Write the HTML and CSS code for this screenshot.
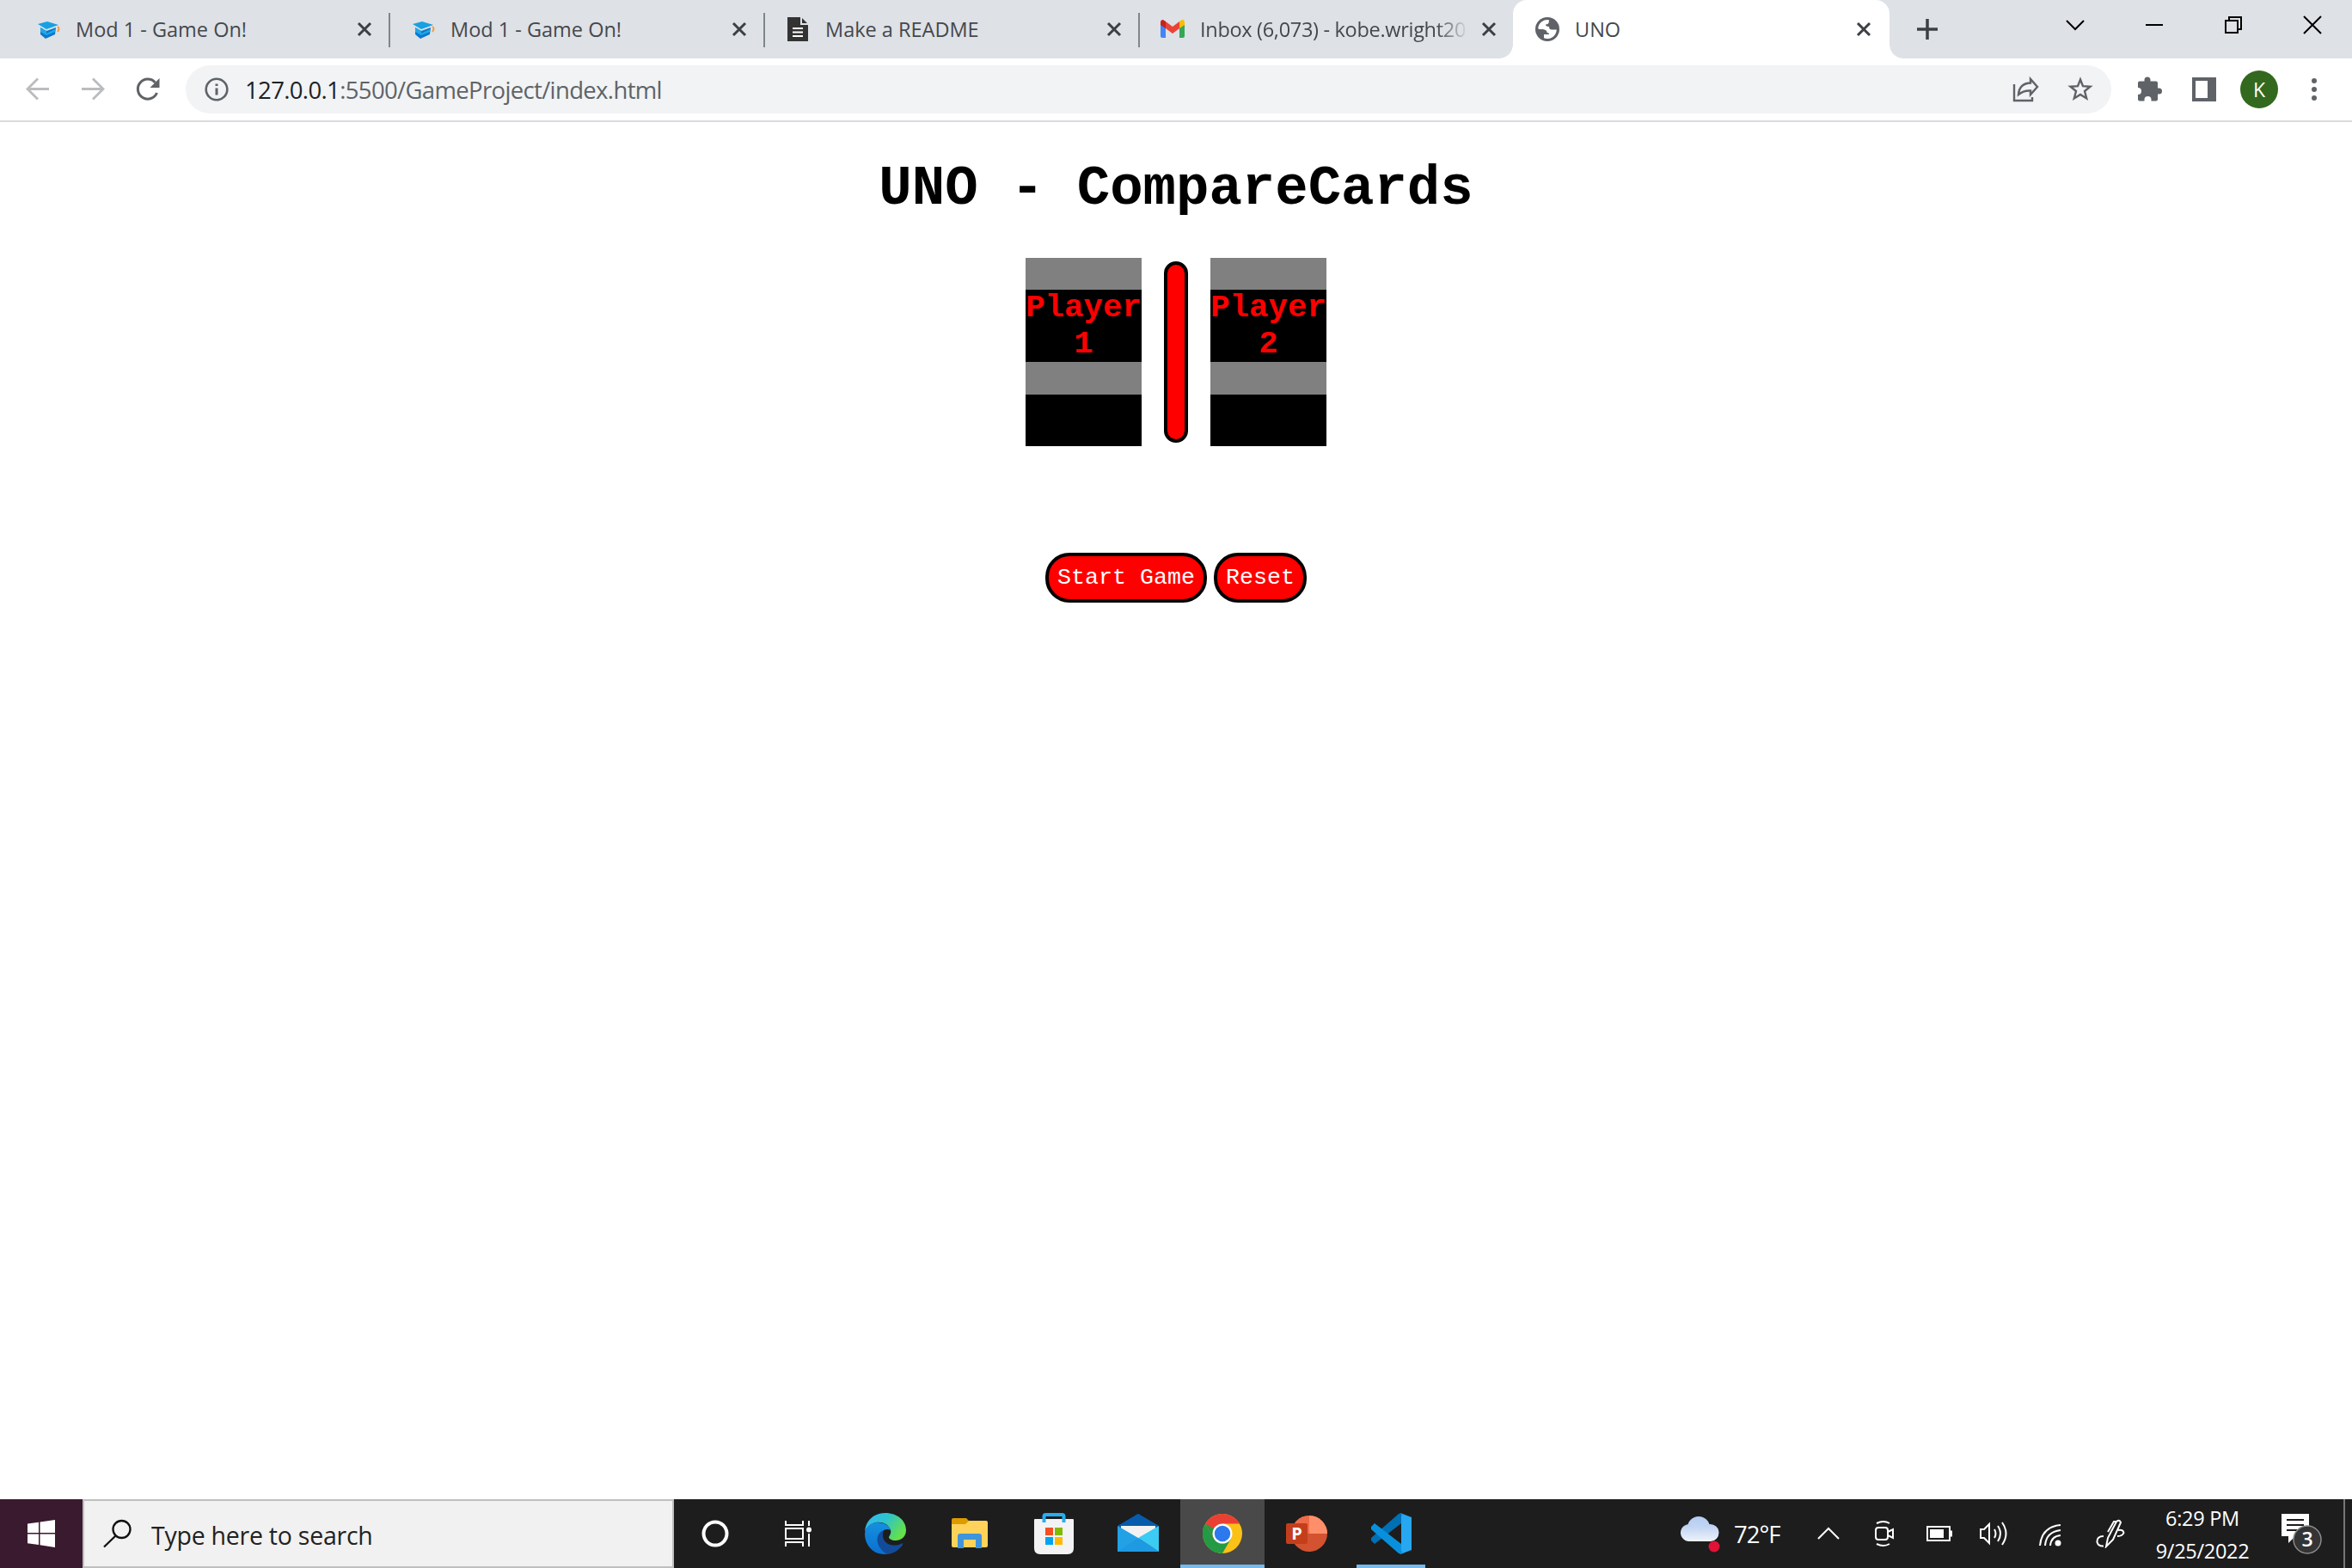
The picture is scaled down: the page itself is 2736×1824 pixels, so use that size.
FILE: index.html
```html
<!DOCTYPE html>
<html lang="en">
<head>
<meta charset="utf-8">
<title>UNO</title>
<link rel="stylesheet" href="styles.css">
</head>
<body>
<svg width="0" height="0" class="defs">
  <defs>
    <symbol id="x" viewBox="0 0 20 20"><path d="M3 3L17 17M17 3L3 17" stroke="#3c4043" stroke-width="3" fill="none"/></symbol>
    <symbol id="cap" viewBox="0 0 28 28"><path d="M5 12L12 16L23 12L22 20L11 25L5 20Z" fill="#0b78cc"/><path d="M5 12L12 16L12 19L22 14V17L12 21L5 17Z" fill="#1fa9e8"/><path d="M2 8L13 5L26 9L12 14Z" fill="#18a0e2"/><path d="M25 11Q28 13 25 17" stroke="#f59a3a" stroke-width="2" fill="none"/></symbol>
  </defs>
</svg>
<div class="tabs">
  <div class="tab"><svg class="fav"><use href="#cap"/></svg><span class="title">Mod 1 - Game On!</span><svg class="close"><use href="#x"/></svg></div>
  <div class="tab"><svg class="fav"><use href="#cap"/></svg><span class="title">Mod 1 - Game On!</span><svg class="close"><use href="#x"/></svg></div>
  <div class="tab"><svg class="fav" viewBox="0 0 28 28"><path d="M2 0H17V9H26V28H2Z" fill="#333"/><path d="M19 1L25 7H19Z" fill="#333"/><path d="M8 13H20M8 17.500H20M8 22H20" stroke="#fff" stroke-width="2"/></svg><span class="title">Make a README</span><svg class="close"><use href="#x"/></svg></div>
  <div class="tab last"><svg class="fav" viewBox="0 0 28 28"><path d="M0 6V22Q0 24 2 24H6V11Z" fill="#4285f4"/><path d="M28 6V22Q28 24 26 24H22V11Z" fill="#34a853"/><path d="M6 5L14 11L22 5V13L14 19L6 13Z" fill="#ea4335"/><path d="M0 9V6Q0 3 3 3L6 5V13Z" fill="#c5221f"/><path d="M28 9V6Q28 3 25 3L22 5V13Z" fill="#fbbc04"/></svg><span class="title inbox">Inbox (6,073) - kobe.wright20</span><svg class="close"><use href="#x"/></svg></div>
  <div class="tab active"><svg class="fav" viewBox="0 0 28 28"><circle cx="14" cy="14" r="14" fill="#5f6368"/><path d="M15.800 3.200A11 11 0 0 0 3.200 12.800L4 14H8.500Q13.500 14.500 13.500 17.500Q14.500 19 16 18.500V20H10V24.300A11 11 0 0 0 24.800 14.500H20Q16 15 16 11Q12 11 12 8.500Q15 8.500 15.800 6Z" fill="#fff"/></svg><span class="title">UNO</span><svg class="close"><use href="#x"/></svg></div>
  <svg class="plus" viewBox="0 0 24 24"><path d="M12 0V24M0 12H24" stroke="#3c4043" stroke-width="3.500"/></svg>
  <div class="winctl">
    <svg viewBox="0 0 24 24"><path d="M2 7L12 17L22 7" class="k"/></svg>
    <svg viewBox="0 0 24 24"><path d="M2 12H22" class="k"/></svg>
    <svg viewBox="0 0 24 24"><path d="M3 7H17V21H3ZM7 7V3H21V17H17" class="k"/></svg>
    <svg viewBox="0 0 24 24"><path d="M2 2L22 22M22 2L2 22" class="k"/></svg>
  </div>
</div>
<div class="toolbar">
  <svg class="nav" viewBox="0 0 32 32"><path d="M29 15.500H4M16 3.500L4 15.500L16 27.500" stroke="#babcbe" stroke-width="2.800" fill="none"/></svg>
  <svg class="nav" viewBox="0 0 32 32"><path d="M3 15.500H28M16 3.500L28 15.500L16 27.500" stroke="#babcbe" stroke-width="2.800" fill="none"/></svg>
  <svg class="nav" viewBox="0 0 32 32"><path d="M26.500 20A11.500 11.500 0 1 1 24.500 8" stroke="#5f6368" stroke-width="3" fill="none"/><path d="M29.500 3V14H18.500Z" fill="#5f6368"/></svg>
  <div class="omni">
    <svg class="info" viewBox="0 0 28 28"><circle cx="14" cy="14" r="12.300" stroke="#5f6368" stroke-width="2.600" fill="none"/><path d="M14 12.500V20.500M14 7.500V10" stroke="#5f6368" stroke-width="3"/></svg>
    <span class="url"><b>127.0.0.1</b>:5500/GameProject/index.html</span>
    <svg class="share" viewBox="0 0 32 32"><path d="M3 10V29H24V25" class="g"/><path d="M8 22Q9 9 22 8.500V4L30 13L22 22V17.500Q14 17 8 22Z" class="g"/></svg>
    <svg class="star" viewBox="0 0 32 32"><path d="M16 4.500L19 12.200L27.500 12.800L21 18L23.200 26.500L16 22L8.800 26.500L11 18L4.500 12.800L13 12.200Z" class="g"/></svg>
  </div>
  <div class="actions">
    <svg viewBox="0 0 32 32"><path d="M5 6.500H10.500V5A3.500 3.500 0 0 1 17.500 5V6.500H24Q26 6.500 26 8.500V14.500H27.500A3.500 3.500 0 0 1 27.500 21.500H26V27.500Q26 29.500 24 29.500H18.500V28A4 4 0 0 0 10.500 28V29.500H5Q3 29.500 3 27.500V22A4 4 0 0 0 3 14V8.500Q3 6.500 5 6.500Z" fill="#5f6368"/></svg>
    <svg viewBox="0 0 32 32"><path fill-rule="evenodd" d="M2 2H30V30H2ZM6 6V26H20V6Z" fill="#5f6368"/></svg>
    <span class="avatar">K</span>
    <svg viewBox="0 0 32 32"><g fill="#5f6368"><circle cx="16" cy="6" r="3"/><circle cx="16" cy="16" r="3"/><circle cx="16" cy="26" r="3"/></g></svg>
  </div>
</div>
<main>
  <h1>UNO - CompareCards</h1>
  <div class="board">
    <section class="card"><h3>Player 1</h3><div class="score"></div></section>
    <div class="divider"></div>
    <section class="card"><h3>Player 2</h3><div class="score"></div></section>
  </div>
  <div class="buttons"><button>Start Game</button><button>Reset</button></div>
</main>
<footer class="taskbar">
  <div class="start"><svg width="32" height="32" viewBox="0 0 32 32"><path d="M0 4.500L13 2.700V15H0ZM14.500 2.500L32 0V15H14.500ZM0 16.500H13V29L0 27.300ZM14.500 16.500H32V32L14.500 29.300Z" fill="#fff"/></svg></div>
  <div class="search"><svg width="34" height="34" viewBox="0 0 34 34"><circle cx="21.500" cy="12" r="10" stroke="#111" stroke-width="2.300" fill="none"/><path d="M14.500 19.500L1 32.500" stroke="#111" stroke-width="2.300"/></svg><span>Type here to search</span></div>
  <div class="apps">
    <div class="app"><svg width="32" height="32" viewBox="0 0 32 32"><circle cx="16" cy="16" r="13.500" stroke="#fff" stroke-width="4" fill="none"/></svg></div>
    <div class="app tv"><svg width="32" height="32" viewBox="0 0 32 32"><path d="M2 1V6H22V1M2 31V26H22V31M2 10H22V22H2ZM29 1V7M29 16V31" stroke="#fff" stroke-width="2" fill="none"/><circle cx="29" cy="11.500" r="3" fill="#fff"/></svg></div>
    <div class="app"><svg width="48" height="48" viewBox="0 0 48 48"><defs><linearGradient id="e1" x1="0" x2="1" y2=".5"><stop offset="0" stop-color="#35b8f5"/><stop offset=".5" stop-color="#2dc3cf"/><stop offset="1" stop-color="#64e04b"/></linearGradient><linearGradient id="e2" x2="0" y2="1"><stop offset="0" stop-color="#1590df"/><stop offset="1" stop-color="#0a6fd0"/></linearGradient></defs><path d="M0 22C1 8 11 0 24 0C38 0 48 9 48 20C48 28 42 32 36 32C31 32 28 30 28 28C29 26 31 24 30 20C28 13 20 10 13 11C7 12 2 16 0 22Z" fill="url(#e1)"/><path d="M0 24C1 15 8 11 14 11C23 11 29 15 30 20C24 17 18 21 18 28C18 37 26 43 34 43C31 47 27 48 23 48C9 48 0 37 0 24Z" fill="url(#e2)"/><path d="M22 20C11 24 12 40 26 48C34 47 40 43 44 37C45 35 43 35 42 36C31 41 17 34 22 20Z" fill="#124c99"/></svg></div>
    <div class="app"><svg width="48" height="48" viewBox="0 0 48 48"><path d="M3 8Q3 6 5 6H20L23 9L20 16H3Z" fill="#dd9b00"/><path d="M3 13H19L23 9H43Q45 9 45 11V38Q45 40 43 40H5Q3 40 3 38Z" fill="#ffd25a"/><path d="M10 41V27Q10 24 13 24H35Q38 24 38 27V41H31V31H17V41Z" fill="#3e95dc"/></svg></div>
    <div class="app"><svg width="48" height="48" viewBox="0 0 48 48"><path d="M1 8Q1 7 2 7H46Q47 7 47 8V41Q47 48 40 48H8Q1 48 1 41Z" fill="#f3f3f3"/><path d="M12.500 11V4Q12.500 2 14.500 2H33.500Q35.500 2 35.500 4V11" stroke="#27aef0" stroke-width="4" fill="none"/><path d="M14 17H23V26H14Z" fill="#f25022"/><path d="M25 17H34V26H25Z" fill="#7fba00"/><path d="M14 28H23V37H14Z" fill="#00a4ef"/><path d="M25 28H34V37H25Z" fill="#ffb900"/></svg></div>
    <div class="app"><svg width="48" height="48" viewBox="0 0 48 48"><path d="M0 15L22 2Q24 0 26 2L48 15V19H0Z" fill="#075bac"/><path d="M4 15H44V30H4Z" fill="#f2f2f2"/><path d="M0 15L24 29L48 45H0Z" fill="#22a1e7"/><path d="M48 15L24 29L48 45Z" fill="#3bcbf3"/><path d="M24 29L48 45H0Z" fill="#1f99e1"/></svg></div>
    <div class="app on"><svg width="46" height="46" viewBox="0 0 48 48"><circle cx="24" cy="24" r="24" fill="#fbc116"/><path d="M3.200 12A24 24 0 0 0 24 48L34.500 30H24L13.500 30Z" fill="#249a45"/><path d="M3.200 12A24 24 0 0 1 44.800 12H24L13.500 30Z" fill="#ea4033"/><path d="M3.200 12L13.500 30L24 24Z" fill="#249a45"/><circle cx="24" cy="24" r="12" fill="#fff"/><circle cx="24" cy="24" r="9.600" fill="#2c78ed"/></svg></div>
    <div class="app"><svg width="48" height="48" viewBox="0 0 48 48"><circle cx="27" cy="24" r="21" fill="#d35230"/><path d="M27 24V3A21 21 0 0 0 6 24Z" fill="#ed6c47"/><path d="M27 24V3A21 21 0 0 1 48 24Z" fill="#ff8f6b"/><rect x="0" y="12" width="25" height="24" rx="2" fill="#c43e1c"/><text x="12.500" y="31" text-anchor="middle" class="ppt">P</text></svg></div>
    <div class="app run"><svg width="48" height="48" viewBox="0 0 48 48"><path d="M1 32L5 36L36 12V0L33 1L1 29Z" fill="#0070b5"/><path d="M1 16L5 12L36 36V48L33 47L1 19Z" fill="#0890dc"/><path d="M35 0L48 5V43L35 48Q37 47 36 44V4Q37 1 35 0Z" fill="#27a7f0"/></svg></div>
  </div>
  <div class="tray">
    <svg class="cloud" viewBox="0 0 48 44"><defs><linearGradient id="c1" x2="0" y2="1"><stop offset="0" stop-color="#b4ccf2"/><stop offset="1" stop-color="#d3e0f5"/></linearGradient><linearGradient id="c2" x2="0" y2="1"><stop offset="0" stop-color="#b9cff0"/><stop offset="1" stop-color="#eef3fb"/></linearGradient></defs><circle cx="21" cy="15" r="13" fill="url(#c1)"/><path d="M10 31A10 10 0 1 1 16 13Q21 16 24 20Q27 11 34 11A10 10 0 0 1 35 31Z" fill="url(#c2)"/><circle cx="39" cy="37" r="6.500" fill="#e01235"/></svg>
    <span class="temp">72°F</span>
    <svg class="ic i1" viewBox="0 0 34 34"><path d="M5 23L17 11L29 23" class="w"/></svg>
    <svg class="ic i2" viewBox="0 0 34 34"><rect x="7" y="10" width="14" height="14" rx="3" class="w"/><path d="M21 15L27 12V22L21 19M8 5Q16 1 23 5M8 29Q16 33 23 29" class="w"/></svg>
    <svg class="ic i3" viewBox="0 0 34 34"><path d="M3 9H29V25H3ZM29 14.500H31V19.500H29" class="w"/><path d="M6 12H22V22H6Z" fill="#fff"/></svg>
    <svg class="ic i4" viewBox="0 0 34 34"><path d="M2 12H6L12 6V28L6 22H2ZM18 12Q21 17 18 22M22 8Q28 17 22 26M27 4Q36 17 27 30" class="w"/></svg>
    <svg class="ic i5" viewBox="0 0 34 34"><path d="M5 31Q7 9 29 7M11 31Q12 15 29 13M17 31Q18 20 29 19" class="w"/><circle cx="26" cy="28" r="3.500" fill="#fff"/></svg>
    <svg class="ic i6" viewBox="0 0 34 34"><path d="M12 32L14 22L24 3Q27 0 29 4L20 24ZM14 15L21 3L24 3M9 20Q1 20 1.500 27Q3 32 9 31.500M26 13Q32 12 32.500 16Q31 20 25 20" class="w"/></svg>
    <div class="clock"><span>6:29 PM</span><span class="date">9/25/2022</span></div>
    <svg class="note" viewBox="0 0 50 50"><path d="M2 2H34V28H18L10 36V28H2Z" fill="#fff"/><path d="M8 9H28M8 15H28M8 21H22" stroke="#1d1d1d" stroke-width="2"/><circle cx="32" cy="32" r="16" fill="#343434" stroke="#8c8c8c" stroke-width="1.500"/><text x="32" y="40" text-anchor="middle" class="cnt">3</text></svg>
    <i class="peek"></i>
  </div>
</footer>
</body>
</html>
```
FILE: styles.css
```css
* { box-sizing: border-box; }
html, body { height: 100%; }
body { margin: 0; display: flex; flex-direction: column; background: #fff; font-family: "Open Sans", "Noto Sans", sans-serif; overflow: hidden; }
svg { display: block; flex: none; }
.defs { position: absolute; }
.k { stroke: #000; stroke-width: 2; fill: none; }
.g { stroke: #5f6368; stroke-width: 2.4; fill: none; }
.w { stroke: #fff; stroke-width: 2; fill: none; }

.tabs { height: 68px; flex: none; display: flex; align-items: center; background: #dee1e6; padding-left: 18px; }
.tab { width: 436px; height: 68px; flex: none; display: flex; align-items: center; padding: 0 20px 0 24px; background: linear-gradient(#80868b, #80868b) right 0 top 15px / 2px 40px no-repeat; }
.tab.last { background: none; }
.fav { width: 28px; height: 28px; }
.title { margin-left: 18px; width: 312px; font-size: 23.5px; color: #45484c; white-space: nowrap; }
.close { width: 20px; height: 20px; margin-left: 14px; }
.inbox { letter-spacing: -0.3px; -webkit-mask-image: linear-gradient(90deg, #000 275px, transparent 312px); mask-image: linear-gradient(90deg, #000 275px, transparent 312px); }
.tab.active { background: #fff; border-radius: 16px 16px 0 0; position: relative; margin-left: -2px; padding-left: 26px; width: 438px; }
.tab.active::before, .tab.active::after { content: ""; position: absolute; bottom: 0; width: 16px; height: 16px; }
.tab.active::before { left: -16px; background: radial-gradient(circle at 0 0, transparent 15.5px, #fff 16px); }
.tab.active::after { right: -16px; background: radial-gradient(circle at 100% 0, transparent 15.5px, #fff 16px); }
.plus { width: 24px; height: 24px; margin-left: 32px; }
.winctl { margin-left: auto; display: flex; gap: 68px; padding-right: 34px; height: 58px; align-items: center; align-self: flex-start; }
.winctl svg { width: 24px; height: 24px; }

.toolbar { height: 74px; flex: none; display: flex; align-items: center; padding: 0 28px; border-bottom: 2px solid #dadbdd; }
.nav { width: 32px; height: 32px; margin-right: 32px; }
.nav:nth-child(3) { margin-right: 28px; }
.omni { width: 2240px; height: 56px; border-radius: 28px; background: #f1f3f4; display: flex; align-items: center; padding: 0 20px 0 22px; }
.info { width: 28px; height: 28px; }
.url { margin-left: 19px; flex: 1; font-size: 27.5px; letter-spacing: -0.65px; color: #5f6368; white-space: nowrap; }
.url b { font-weight: 400; color: #202124; }
.share, .star { width: 32px; height: 32px; }
.star { margin-left: 32px; }
.actions { display: flex; align-items: center; margin-left: 28px; }
.actions svg { width: 32px; height: 32px; margin-right: 32px; }
.actions svg:nth-child(2) { margin-right: 26px; }
.actions svg:last-child { margin-right: 0; }
.avatar { width: 44px; height: 44px; border-radius: 50%; background: #33691e; color: #fff; font-size: 23px; line-height: 44px; text-align: center; margin-right: 26px; }

main { flex: 1; display: flex; flex-direction: column; align-items: center; font-family: "Liberation Mono", "Courier New", monospace; }
h1 { margin: 42px 0 0; font-size: 64px; line-height: 72px; }
.board { display: flex; margin-top: 44px; gap: 26px; }
.card { width: 135px; height: 219px; background: #808080; padding-top: 37px; }
h3 { margin: 0; height: 84px; font-size: 37.44px; line-height: 42px; background: #000; color: #f00; text-align: center; }
.score { height: 60px; margin-top: 38px; background: #000; }
.divider { width: 28px; height: 211px; margin-top: 4px; border: 4px solid #000; border-radius: 14px; background: #f00; }
.buttons { display: flex; gap: 8px; margin-top: 124px; }
button { height: 58px; border: 4px solid #000; border-radius: 28px; background: #f00; color: #fff; font: 26.67px/30px "Liberation Mono", "Courier New", monospace; padding: 0 10px; }

.taskbar { height: 80px; flex: none; display: flex; background: #1d1d1d; color: #fff; }
.start { width: 96px; background: #3a1a2e; display: grid; place-items: center; }
.search { width: 688px; border: 2px solid #bfbfbf; background: #f1f1f1; color: #222; display: flex; align-items: center; padding-left: 22px; font-size: 28.5px; letter-spacing: -0.25px; }
.search span { margin: 4px 0 0 22px; }
.apps { display: flex; }
.app { width: 98px; display: grid; place-items: center; }
.app:nth-child(1) { width: 96px; }
.app.tv { width: 96px; margin-right: 5px; }
.on { background: #494949; box-shadow: inset 0 -4px #76b9ed; }
.run { background: linear-gradient(#76b9ed, #76b9ed) center bottom / 80px 4px no-repeat; }
.ppt { font: 700 20px "Open Sans", sans-serif; fill: #fff; }
.tray { display: flex; align-items: center; margin-left: auto; }
.cloud { width: 48px; height: 44px; }
.temp { font-size: 27.5px; letter-spacing: -1px; width: 93px; margin-left: 14px; }
.ic { width: 34px; height: 34px; }
.i1 { margin-right: 31px; }
.i2 { margin-right: 30px; }
.i3 { margin-right: 29px; }
.i4 { margin-right: 32px; }
.i5 { margin-right: 36px; }
.i6 { margin-right: 30px; }
.clock { display: flex; flex-direction: column; align-items: center; width: 120px; margin-right: 30px; padding-top: 2px; font-size: 23.5px; line-height: 38px; letter-spacing: -0.3px; }
.note { width: 50px; height: 50px; }
.cnt { font: 600 23px "Open Sans", sans-serif; fill: #fff; }
.peek { width: 2px; height: 80px; background: #777; margin: 0 8px 0 24px; }
```
